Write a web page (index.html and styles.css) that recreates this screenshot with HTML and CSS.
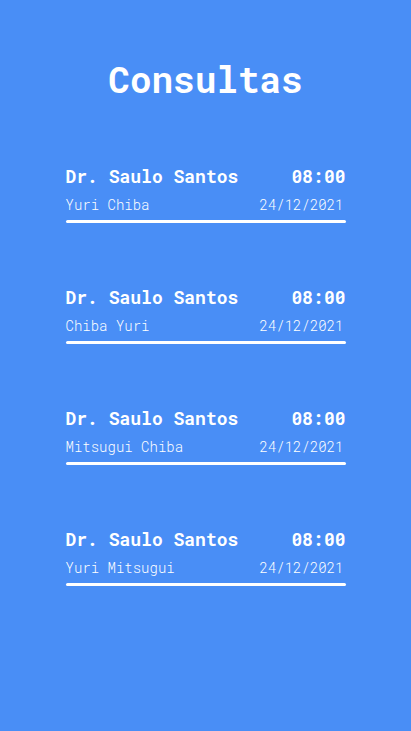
FILE: index.html
```html
<!DOCTYPE html>
<html lang="pt">
<head>
<meta charset="utf-8">
<title>Consultas</title>
<link rel="stylesheet" href="styles.css">
</head>
<body>
<main class="page">
  <h1 class="title">Consultas</h1>
  <ul class="list">
    <li class="card">
      <div class="row main"><span>Dr. Saulo Santos</span><span>08:00</span></div>
      <div class="row sub"><span>Yuri Chiba</span><span>24/12/2021</span></div>
      <div class="rule"></div>
    </li>
    <li class="card">
      <div class="row main"><span>Dr. Saulo Santos</span><span>08:00</span></div>
      <div class="row sub"><span>Chiba Yuri</span><span>24/12/2021</span></div>
      <div class="rule"></div>
    </li>
    <li class="card">
      <div class="row main"><span>Dr. Saulo Santos</span><span>08:00</span></div>
      <div class="row sub"><span>Mitsugui Chiba</span><span>24/12/2021</span></div>
      <div class="rule"></div>
    </li>
    <li class="card">
      <div class="row main"><span>Dr. Saulo Santos</span><span>08:00</span></div>
      <div class="row sub"><span>Yuri Mitsugui</span><span>24/12/2021</span></div>
      <div class="rule"></div>
    </li>
  </ul>
</main>
</body>
</html>
```
FILE: styles.css
```css
html, body {
  margin: 0;
  padding: 0;
  background: #498ef6;
  height: 100%;
}
body {
  font-family: "Roboto Mono", "DejaVu Sans Mono", "Liberation Mono", monospace;
  color: #ffffff;
}
.page {
  display: flex;
  flex-direction: column;
  align-items: center;
  padding-top: 57px;
}
.title {
  margin: 0;
  font-size: 36px;
  line-height: 44px;
  font-weight: 700;
}
.list {
  list-style: none;
  margin: 63px 0 0;
  padding: 0;
  width: 280px;
  display: flex;
  flex-direction: column;
  gap: 62px;
}
.card {
  display: flex;
  flex-direction: column;
}
.row {
  display: flex;
  justify-content: space-between;
  align-items: center;
}
.main {
  font-size: 18px;
  line-height: 24px;
  font-weight: 700;
}
.sub {
  margin-top: 7px;
  font-size: 14px;
  line-height: 20px;
  font-weight: 300;
  padding-right: 2px;
}
.rule {
  margin-top: 5px;
  height: 3px;
  border-radius: 2px;
  background: #ffffff;
}
```
